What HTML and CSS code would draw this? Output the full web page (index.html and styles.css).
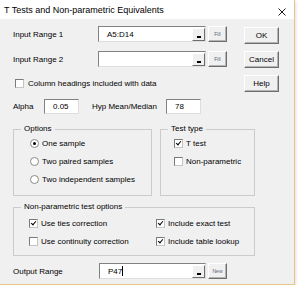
FILE: index.html
```html
<!DOCTYPE html>
<html lang="en">
<head>
  <meta charset="UTF-8" />
  <meta name="viewport" content="width=device-width, initial-scale=1.0"/>
  <title>T Tests and Non-parametric Equivalents</title>
  <link rel="stylesheet" href="styles.css">
</head>
<body>

  <div class="window">
    <div class="titlebar">
      <span>T Tests and Non-parametric Equivalents</span>
      <svg class="close" width="8" height="8" viewBox="0 0 8 8">
        <path d="M0.5 0.5L7.5 7.5M7.5 0.5L0.5 7.5" stroke="#1a1a1a" stroke-width="1"/>
      </svg>
    </div>

    <div class="dialog">
      <div class="top">
        <span class="label">Input Range 1</span>
        <div class="refedit"><span class="val">A5:D14</span><span class="mini"></span></div>
        <button class="small">Fill</button>
        <button class="btn ok">OK</button>

        <span class="label">Input Range 2</span>
        <div class="refedit"><span class="val"></span><span class="mini"></span></div>
        <button class="small">Fill</button>
        <button class="btn">Cancel</button>

        <div class="row headings"><span class="check"></span>Column headings included with data</div>
        <button class="btn">Help</button>
      </div>

      <div class="params">
        <span class="alpha">Alpha</span>
        <div class="textbox">0.05</div>
        <span class="hyp">Hyp Mean/Median</span>
        <div class="textbox">78</div>
      </div>

      <div class="groups">
        <fieldset class="options">
          <legend>Options</legend>
          <div class="list">
            <div class="row"><span class="radio on"></span>One sample</div>
            <div class="row"><span class="radio"></span>Two paired samples</div>
            <div class="row"><span class="radio"></span>Two independent samples</div>
          </div>
        </fieldset>
        <fieldset class="testtype">
          <legend>Test type</legend>
          <div class="list">
            <div class="row"><span class="check on"></span>T test</div>
            <div class="row"><span class="check"></span>Non-parametric</div>
          </div>
        </fieldset>
      </div>

      <fieldset class="nonparam">
        <legend>Non-parametric test options</legend>
        <div class="list">
          <div class="row"><span class="check on"></span>Use ties correction</div>
          <div class="row"><span class="check on"></span>Include exact test</div>
          <div class="row"><span class="check"></span>Use continuity correction</div>
          <div class="row"><span class="check on"></span>Include table lookup</div>
        </div>
      </fieldset>

      <div class="output">
        <span class="label">Output Range</span>
        <div class="refedit"><span class="val">P47<i class="caret"></i></span><span class="mini"></span></div>
        <button class="small">New</button>
      </div>
    </div>
  </div>

</body>
</html>
```

FILE: styles.css
```css
body {
  margin: 0;
  background-color: #fff;
  font-family: "Liberation Sans", Arial, sans-serif;
  font-size: 8px;
  color: #000;
}

.window {
  width: 295px;
  height: 285px;
  box-sizing: border-box;
  background-color: #f0f0f0;
  border-right: 1px solid #eac387;
  border-bottom: 1px solid #eac387;
  box-shadow: 1px 1px 3px rgba(0,0,0,0.12);
}

.titlebar {
  height: 19px;
  background-color: #fff;
  display: flex;
  justify-content: space-between;
  align-items: center;
  padding: 0 8px 0 4px;
  font-size: 9px;
}

.titlebar .close {
  align-self: flex-start;
  margin-top: 8px;
}

.dialog {
  padding: 7px 0 0 13px;
}

.top {
  display: grid;
  grid-template-columns: 85px 108px 38px 35px;
  grid-template-rows: 25px 24px 17px;
  align-items: start;
}

.top .label {
  align-self: center;
  margin-top: -8px;
}

.row {
  display: flex;
  align-items: center;
  gap: 3px;
}

.headings {
  grid-column: 1 / 4;
  align-self: center;
  margin-left: 2px;
  gap: 4px;
}

/* text boxes */
.refedit,
.textbox {
  box-sizing: border-box;
  background-color: #fff;
  border: 1px solid;
  border-color: #828282 #dedede #dedede #828282;
}

.refedit {
  display: flex;
  align-items: center;
  height: 16px;
}

.refedit .val {
  flex: 1;
  padding-left: 8px;
  display: flex;
  align-items: center;
}

.refedit .mini {
  position: relative;
  box-sizing: border-box;
  width: 13px;
  height: 13px;
  margin-right: 0;
  background-color: #f0f0f0;
  border: 1px solid;
  border-color: #fff #6e6e6e #6e6e6e #fff;
}

.refedit .mini::after {
  content: "";
  position: absolute;
  left: 4px;
  bottom: 2px;
  width: 4px;
  height: 2px;
  background-color: #000;
}

.caret {
  display: inline-block;
  width: 1px;
  height: 10px;
  background-color: #000;
}

.textbox {
  width: 35px;
  height: 15px;
  padding-left: 8px;
  line-height: 13px;
}

/* buttons */
.btn,
.small {
  box-sizing: border-box;
  padding: 0;
  background-color: #f0f0f0;
  border: 1px solid;
  border-color: #fff #6e6e6e #6e6e6e #fff;
  box-shadow: inset -1px -1px 0 #b4b4b4;
  font-family: inherit;
  color: #000;
}

.btn {
  width: 35px;
  height: 17px;
  font-size: 8px;
}

.btn.ok {
  margin-top: 1px;
}

.small {
  width: 19px;
  height: 16px;
  margin-left: 2px;
  font-size: 5px;
  color: #5a6478;
}

.params {
  display: flex;
  align-items: center;
  margin-top: 7px;
  height: 15px;
}

.params .alpha {
  width: 31px;
}

.params .hyp {
  width: 74px;
  margin-left: 13px;
}

/* check boxes and radios */
.check,
.radio {
  position: relative;
  box-sizing: border-box;
  width: 9px;
  height: 9px;
  background-color: #fff;
  border: 1px solid;
  border-color: #7a7a7a #c4c4c4 #c4c4c4 #7a7a7a;
  flex-shrink: 0;
}

.check.on::after {
  content: "";
  position: absolute;
  left: 2px;
  top: 0;
  width: 2px;
  height: 4px;
  border: solid #000;
  border-width: 0 1.5px 1.5px 0;
  transform: rotate(40deg);
}

.radio {
  border-radius: 50%;
  border-color: #8a8a8a;
}

.radio.on::after {
  content: "";
  position: absolute;
  left: 2px;
  top: 2px;
  width: 3px;
  height: 3px;
  border-radius: 50%;
  background-color: #000;
}

/* group boxes */
fieldset {
  margin: 0;
  padding: 0;
  min-width: 0;
  border: 1px solid #cbcbcb;
}

legend {
  padding: 0 3px;
  margin-left: 7px;
  line-height: 10px;
}

.groups {
  display: flex;
  gap: 8px;
  margin-top: 10px;
}

.groups .row {
  height: 18px;
}

.options {
  width: 139px;
  box-sizing: border-box;
}

.options .list {
  padding: 0 0 7px 16px;
}

.testtype {
  width: 95px;
  box-sizing: border-box;
}

.testtype .list {
  padding: 0 0 0 13px;
}

.nonparam {
  width: 242px;
  box-sizing: border-box;
  margin-top: 6px;
}

.nonparam .list {
  display: grid;
  grid-template-columns: 127px 1fr;
  grid-auto-rows: 18px;
  padding: 2px 0 5px 15px;
}

.output {
  display: flex;
  align-items: center;
  margin-top: 7px;
}

.output .label {
  width: 86px;
}

.output .refedit {
  width: 107px;
}
```
